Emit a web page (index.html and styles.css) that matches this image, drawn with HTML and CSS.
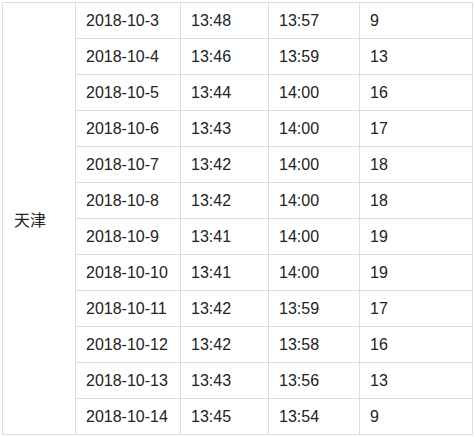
FILE: index.html
```html
<!DOCTYPE html>
<html lang="zh">
<head>
<meta charset="utf-8">
<link rel="stylesheet" href="styles.css">
</head>
<body>
<div class="wrap">
<table class="sun">
<colgroup>
<col class="c1"><col class="c2"><col class="c3"><col class="c4"><col class="c5">
</colgroup>
<tbody>
<tr><td class="city" rowspan="12">天津</td><td>2018-10-3</td><td>13:48</td><td>13:57</td><td>9</td></tr>
<tr><td>2018-10-4</td><td>13:46</td><td>13:59</td><td>13</td></tr>
<tr><td>2018-10-5</td><td>13:44</td><td>14:00</td><td>16</td></tr>
<tr><td>2018-10-6</td><td>13:43</td><td>14:00</td><td>17</td></tr>
<tr><td>2018-10-7</td><td>13:42</td><td>14:00</td><td>18</td></tr>
<tr><td>2018-10-8</td><td>13:42</td><td>14:00</td><td>18</td></tr>
<tr><td>2018-10-9</td><td>13:41</td><td>14:00</td><td>19</td></tr>
<tr><td>2018-10-10</td><td>13:41</td><td>14:00</td><td>19</td></tr>
<tr><td>2018-10-11</td><td>13:42</td><td>13:59</td><td>17</td></tr>
<tr><td>2018-10-12</td><td>13:42</td><td>13:58</td><td>16</td></tr>
<tr><td>2018-10-13</td><td>13:43</td><td>13:56</td><td>13</td></tr>
<tr><td>2018-10-14</td><td>13:45</td><td>13:54</td><td>9</td></tr>
</tbody>
</table>
</div>
</body>
</html>
```
FILE: styles.css
```css
html, body {
  margin: 0;
  padding: 0;
  background: #fff;
}
.wrap {
  padding: 2px 0 0 2px;
}
.sun {
  border-collapse: collapse;
  table-layout: fixed;
  width: 470px;
  font-family: "Liberation Sans", Arial, "Noto Sans CJK SC", sans-serif;
  font-size: 16px;
  color: #222;
}
.c1 { width: 73px; }
.c2 { width: 105px; }
.c3 { width: 88px; }
.c4 { width: 91px; }
.c5 { width: 113px; }
.sun td {
  border: 1px solid #ddd;
  height: 36px;
  padding: 0 0 0 10px;
  vertical-align: middle;
  white-space: nowrap;
  box-sizing: border-box;
}
.sun td.city {
  padding-left: 11px;
}
```
